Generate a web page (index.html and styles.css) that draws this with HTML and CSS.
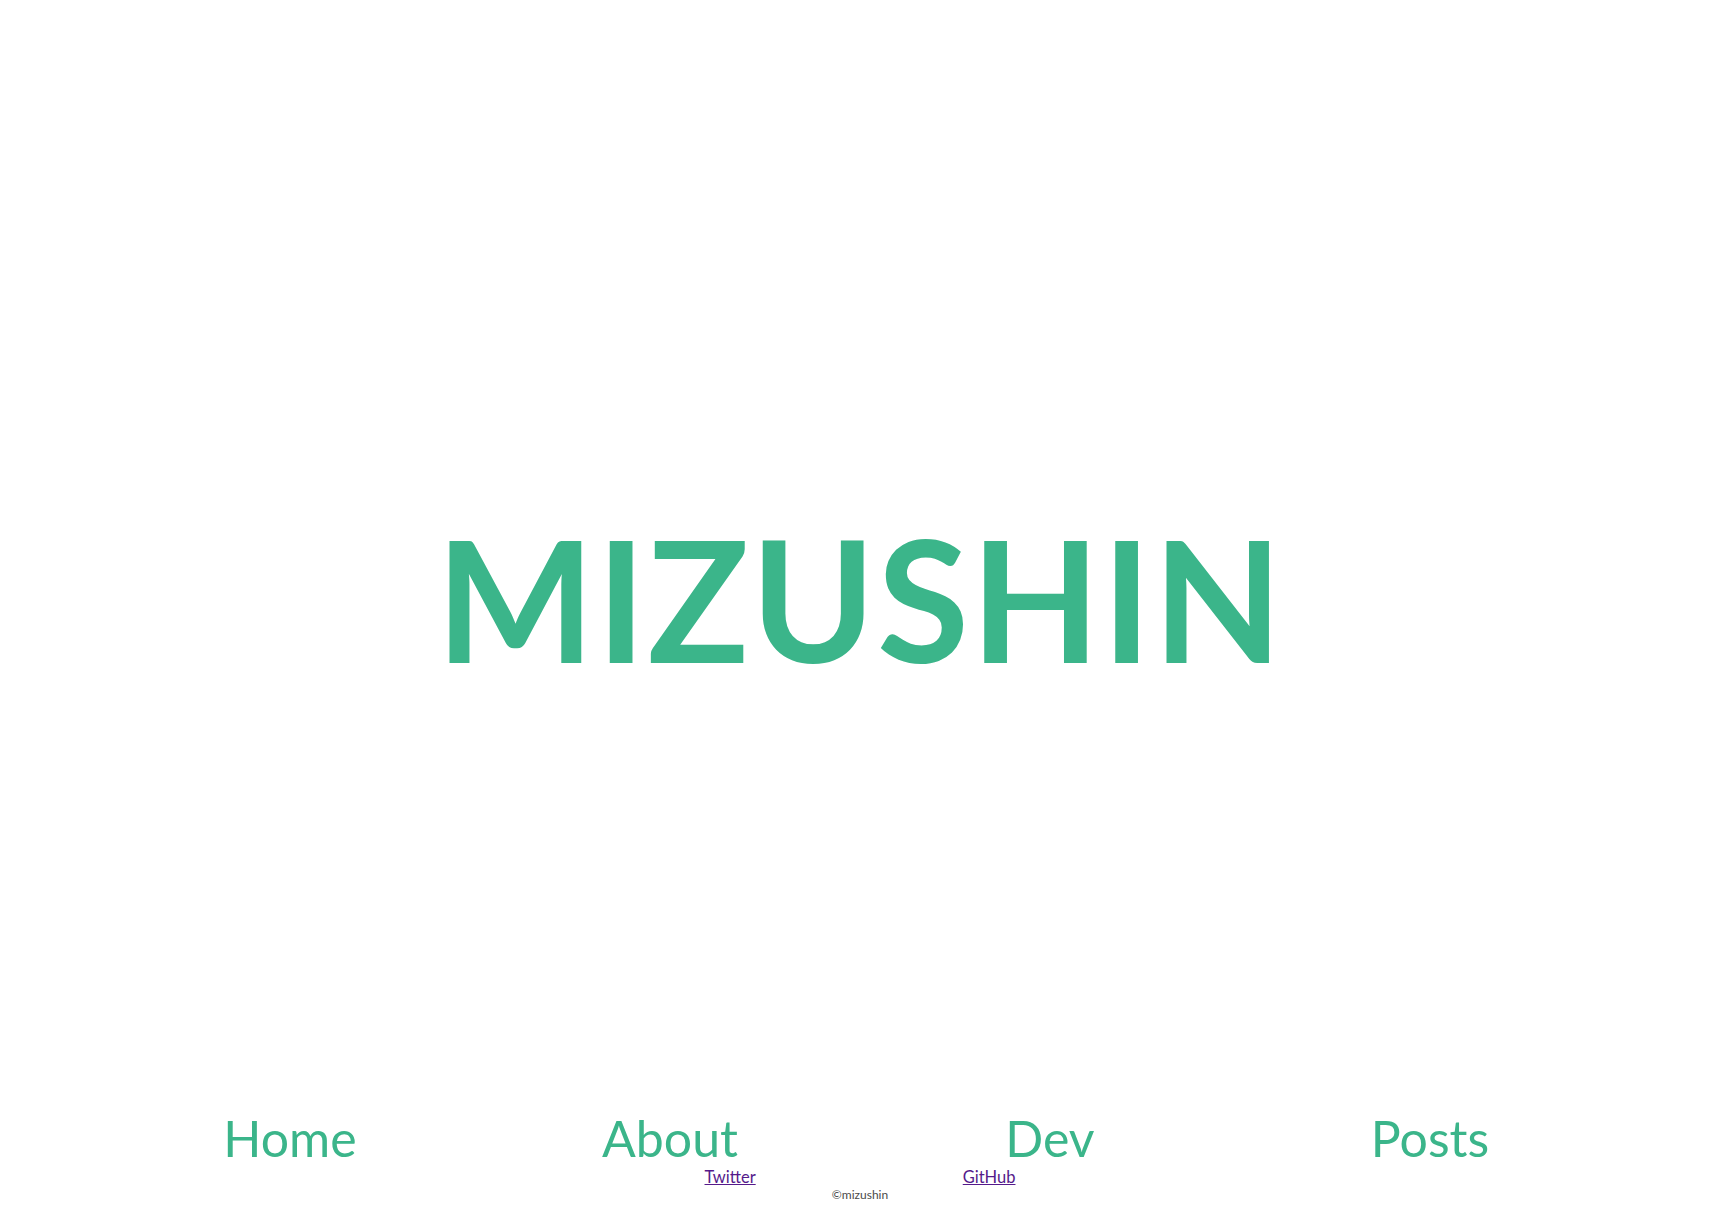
FILE: index.html
```html
<!DOCTYPE html>
<html lang="ja">
<head>
<meta charset="utf-8">
<title>MIZUSHIN</title>
<link rel="stylesheet" href="styles.css">
</head>
<body>
<div class="page">
  <header class="hero">
    <h1 class="title">MIZUSHIN</h1>
  </header>
  <footer class="bottom">
    <nav class="nav">
      <a class="nav-item" href="#">Home</a>
      <a class="nav-item" href="#">About</a>
      <a class="nav-item" href="#">Dev</a>
      <a class="nav-item" href="#">Posts</a>
    </nav>
    <div class="links">
      <a class="link" href="#">Twitter</a>
      <a class="link" href="#">GitHub</a>
    </div>
    <p class="copy">©mizushin</p>
  </footer>
</div>
</body>
</html>
```

FILE: styles.css
```css
html, body {
  margin: 0;
  padding: 0;
  background: #ffffff;
}

body {
  font-family: Lato, "Noto Sans", "Liberation Sans", sans-serif;
}

.page {
  display: flex;
  flex-direction: column;
  height: 100vh;
}

.hero {
  display: flex;
  justify-content: center;
  padding-top: 498px;
}

.title {
  margin: 0;
  font-size: 168px;
  font-weight: 700;
  line-height: 1.2;
  color: #3bb58a;
  letter-spacing: 1.5px;
}

.bottom {
  margin-top: auto;
  padding-bottom: 15px;
  display: flex;
  flex-direction: column;
  align-items: center;
}

.nav {
  width: 1520px;
  display: grid;
  grid-template-columns: repeat(4, 1fr);
}

.nav-item {
  text-align: center;
  font-size: 50px;
  line-height: 1.2;
  color: #3bb58a;
  text-decoration: none;
}

.links {
  width: 518px;
  display: flex;
  justify-content: space-around;
}

.link {
  font-size: 16.5px;
  line-height: 1.2;
  color: #551a8b;
}

.copy {
  margin: 0;
  font-size: 12px;
  line-height: 1.2;
  color: #4a4a4a;
}
```
